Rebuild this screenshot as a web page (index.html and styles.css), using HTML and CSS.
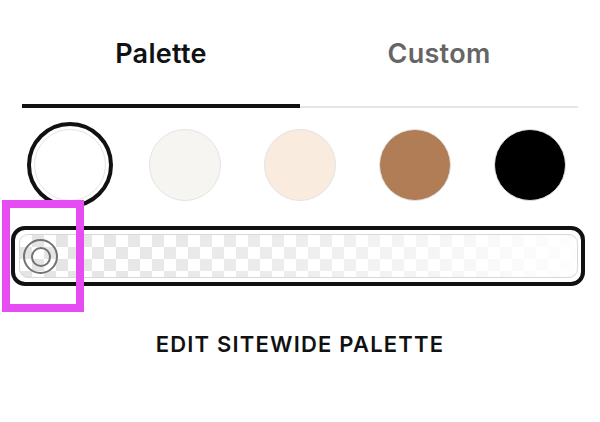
FILE: index.html
```html
<!DOCTYPE html>
<html>
<head>
<meta charset="utf-8">
<link rel="stylesheet" href="styles.css">
</head>
<body>
<div class="panel">
  <div class="tabs">
    <div class="tab active">Palette</div>
    <div class="tab">Custom</div>
  </div>
  <div class="swatches">
    <div class="swatch-wrap selected"><div class="swatch white"></div></div>
    <div class="swatch-wrap"><div class="swatch offwhite"></div></div>
    <div class="swatch-wrap"><div class="swatch cream"></div></div>
    <div class="swatch-wrap"><div class="swatch tan"></div></div>
    <div class="swatch-wrap"><div class="swatch black"></div></div>
  </div>
  <div class="slider">
    <div class="track">
      <div class="thumb"><div class="thumb-inner"></div></div>
    </div>
  </div>
  <div class="edit">EDIT SITEWIDE PALETTE</div>
  <div class="highlight"></div>
</div>
</body>
</html>
```
FILE: styles.css
```css
html, body {
  margin: 0;
  padding: 0;
  background: #fff;
}
.panel {
  position: relative;
  width: 600px;
  height: 422px;
  font-family: Inter, "Liberation Sans", sans-serif;
  color: #111;
}
.tabs {
  display: flex;
  margin: 0 22px;
}
.tab {
  flex: 1;
  box-sizing: border-box;
  height: 108px;
  padding-top: 40px;
  text-align: center;
  font-size: 27px;
  line-height: 27px;
  font-weight: 600;
  letter-spacing: 0.3px;
  color: #656565;
  border-bottom: 2px solid #e6e6e6;
}
.tab.active {
  color: #111;
  border-bottom: 4px solid #111;
}
.swatches {
  display: flex;
  justify-content: space-between;
  margin: 14px 27px 0;
}
.swatch-wrap {
  width: 86px;
  height: 86px;
  box-sizing: border-box;
  border-radius: 50%;
  display: flex;
  align-items: center;
  justify-content: center;
}
.swatch-wrap.selected {
  border: 4px solid #111;
}
.swatch {
  width: 72px;
  height: 72px;
  box-sizing: border-box;
  border-radius: 50%;
  border: 1.5px solid #e4e4e4;
}
.swatch.white { background: #fff; }
.swatch.offwhite { background: #f6f5f1; }
.swatch.cream { background: #f9ebdd; }
.swatch.tan { background: #b07d56; }
.swatch.black { background: #000; border-color: #e2e2e2; }
.slider {
  box-sizing: border-box;
  margin: 18px 0 0 11px;
  width: 574px;
  height: 60px;
  border: 4px solid #111;
  border-radius: 14px;
  padding: 4px 3px 4px 4px;
}
.track {
  position: relative;
  box-sizing: border-box;
  height: 100%;
  border: 1px solid #d8d8d8;
  border-radius: 9px;
  background:
    linear-gradient(to right, rgba(255,255,255,0) 0%, rgba(255,255,255,0.3) 45%, rgba(255,255,255,0.95) 100%),
    conic-gradient(#e4e4e4 25%, #fff 0 50%, #e4e4e4 0 75%, #fff 0) 0 0 / 24px 24px;
}
.thumb {
  position: absolute;
  left: 3px;
  top: 4px;
  width: 35px;
  height: 35px;
  box-sizing: border-box;
  border: 2px solid #737373;
  border-radius: 50%;
  display: flex;
  align-items: center;
  justify-content: center;
}
.thumb-inner {
  width: 20px;
  height: 20px;
  box-sizing: border-box;
  border: 2px solid #737373;
  border-radius: 50%;
}
.edit {
  margin-top: 47px;
  text-align: center;
  font-size: 22px;
  line-height: 22px;
  font-weight: 600;
  letter-spacing: 1.2px;
  color: #111;
}
.highlight {
  position: absolute;
  left: 2px;
  top: 200px;
  width: 82px;
  height: 112px;
  box-sizing: border-box;
  border: 8px solid #e54cf2;
}
```
